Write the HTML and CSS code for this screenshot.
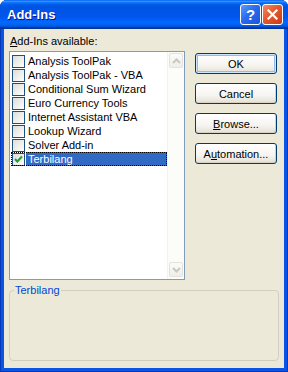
FILE: index.html
```html
<!DOCTYPE html>
<html lang="en">
<head>
  <meta charset="UTF-8">
  <title>Add-Ins</title>
  <link rel="stylesheet" href="styles.css">
</head>
<body>
  <div class="window">
    <div class="titlebar">
      <span class="title">Add-Ins</span>
      <div class="caption-btns">
        <div class="cap-btn help">?</div>
        <div class="cap-btn close">
          <svg width="13" height="13" viewBox="0 0 13 13"><path d="M2.5 2.5 L10.5 10.5 M10.5 2.5 L2.5 10.5" stroke="#fff" stroke-width="2.2" stroke-linecap="square"/></svg>
        </div>
      </div>
    </div>

    <div class="client">
      <div class="main">
        <div class="left">
          <div class="label"><u>A</u>dd-Ins available:</div>
          <div class="listbox">
            <div class="items">
              <div class="row"><span class="check"></span><span class="name">Analysis ToolPak</span></div>
              <div class="row"><span class="check"></span><span class="name">Analysis ToolPak - VBA</span></div>
              <div class="row"><span class="check"></span><span class="name">Conditional Sum Wizard</span></div>
              <div class="row"><span class="check"></span><span class="name">Euro Currency Tools</span></div>
              <div class="row"><span class="check"></span><span class="name">Internet Assistant VBA</span></div>
              <div class="row"><span class="check"></span><span class="name">Lookup Wizard</span></div>
              <div class="row"><span class="check"></span><span class="name">Solver Add-in</span></div>
              <div class="row selected">
                <span class="check">
                  <svg width="11" height="11" viewBox="0 0 11 11"><path d="M2 5 L4.3 7.5 L9 2.5" fill="none" stroke="#21a121" stroke-width="2"/></svg>
                </span>
                <span class="name">Terbilang</span>
              </div>
            </div>
            <div class="scrollbar">
              <div class="sb-btn">
                <svg width="9" height="6" viewBox="0 0 9 6"><path d="M1 5 L4.5 1.5 L8 5" fill="none" stroke="#c9c8c0" stroke-width="2"/></svg>
              </div>
              <div class="sb-btn">
                <svg width="9" height="6" viewBox="0 0 9 6"><path d="M1 1 L4.5 4.5 L8 1" fill="none" stroke="#c9c8c0" stroke-width="2"/></svg>
              </div>
            </div>
          </div>
        </div>

        <div class="buttons">
          <div class="btn default">OK</div>
          <div class="btn">Cancel</div>
          <div class="btn"><u>B</u>rowse...</div>
          <div class="btn">A<u>u</u>tomation...</div>
        </div>
      </div>

      <fieldset class="group">
        <legend>Terbilang</legend>
      </fieldset>
    </div>
  </div>
</body>
</html>
```

FILE: styles.css
```css
* {
  margin: 0;
  padding: 0;
  box-sizing: border-box;
}

body {
  background: #fff;
  font-family: "Liberation Sans", Arial, sans-serif;
  font-size: 11px;
  color: #000;
}

.window {
  width: 288px;
  height: 372px;
  display: flex;
  flex-direction: column;
  background: #0a55e4;
  border-radius: 7px 7px 0 0;
  overflow: hidden;
  box-shadow: inset 1px 0 #0838b8, inset -1px 0 #0838b8, inset 0 -1px #0838b8;
}

.titlebar {
  height: 29px;
  flex-shrink: 0;
  display: flex;
  align-items: center;
  justify-content: space-between;
  padding: 0 5px 1px 7px;
  background: linear-gradient(to bottom, #0058ee 0%, #3593ff 4%, #288eff 6%, #127dff 8%, #036ffc 10%, #0262ee 14%, #0057e5 20%, #0054e3 24%, #0055eb 56%, #005bf5 66%, #026afe 76%, #0062ef 86%, #0052d6 92%, #0040ab 94%, #003092 100%);
}

.title {
  color: #fff;
  font-weight: bold;
  font-size: 13px;
  text-shadow: 1px 1px #0f1089;
}

.caption-btns {
  display: flex;
  gap: 1px;
}

.cap-btn {
  width: 21px;
  height: 21px;
  border: 1px solid #fff;
  border-radius: 3px;
  display: flex;
  align-items: center;
  justify-content: center;
}

.help {
  background: linear-gradient(135deg, #5c9cff 0%, #2a6af0 45%, #1a55d8 100%);
  color: #fff;
  font-weight: bold;
  font-size: 15px;
}

.close {
  background: linear-gradient(135deg, #f28a64 0%, #e2592f 45%, #c93c16 100%);
}

.client {
  flex: 1;
  margin: 0 4px 4px 4px;
  padding: 6px 5px 0 5px;
  background: #ece9d8;
}

.main {
  display: flex;
}

.label {
  height: 13px;
  line-height: 13px;
  margin: 0 0 3px 1px;
}

.listbox {
  width: 176px;
  height: 229px;
  border: 1px solid #7f9db9;
  background: #fff;
  display: flex;
}

.items {
  flex: 1;
  padding: 2px 0 0 1px;
}

.row {
  height: 14px;
  display: flex;
  align-items: flex-start;
}

.check {
  width: 13px;
  height: 13px;
  margin: 1px 0 0 1px;
  border: 1px solid #1c5180;
  background: linear-gradient(135deg, #dcdcd7 0%, #fff 100%);
  display: flex;
  align-items: center;
  justify-content: center;
}

.name {
  flex: 1;
  height: 14px;
  line-height: 14px;
  margin-left: 1px;
  padding: 0 2px;
}

.selected {
  outline: 1px dotted #000;
  outline-offset: -1px;
}

.selected .name {
  background: #316ac5;
  color: #fff;
}

.scrollbar {
  width: 17px;
  padding: 1px 1px 2px 1px;
  display: flex;
  flex-direction: column;
  justify-content: space-between;
  background: #fcfcf9;
  border-left: 1px solid #f3f2ec;
}

.sb-btn {
  height: 15px;
  border: 1px solid #e3e2dc;
  border-radius: 2px;
  background: linear-gradient(to bottom, #fbfbf8, #efeee8);
  display: flex;
  align-items: center;
  justify-content: center;
}

.buttons {
  width: 82px;
  margin: 18px 0 0 10px;
  display: flex;
  flex-direction: column;
  gap: 9px;
}

.btn {
  height: 21px;
  border: 1px solid #003c74;
  border-radius: 3px;
  background: linear-gradient(to bottom, #fff 0%, #f5f4ef 60%, #e3e0d4 100%);
  box-shadow: inset -1px -1px #d6d0c5;
  display: flex;
  align-items: center;
  justify-content: center;
}

.btn.default {
  box-shadow: inset 0 0 0 1px #cee7ff, inset 0 0 0 2px #98b8ea;
}

.group {
  width: 270px;
  height: 77px;
  margin-top: 4px;
  padding: 0 4px;
  border: 1px solid #d0d0bf;
  border-radius: 4px;
}

.group legend {
  padding: 0 1px;
  color: #0046d5;
  line-height: 13px;
}
```
